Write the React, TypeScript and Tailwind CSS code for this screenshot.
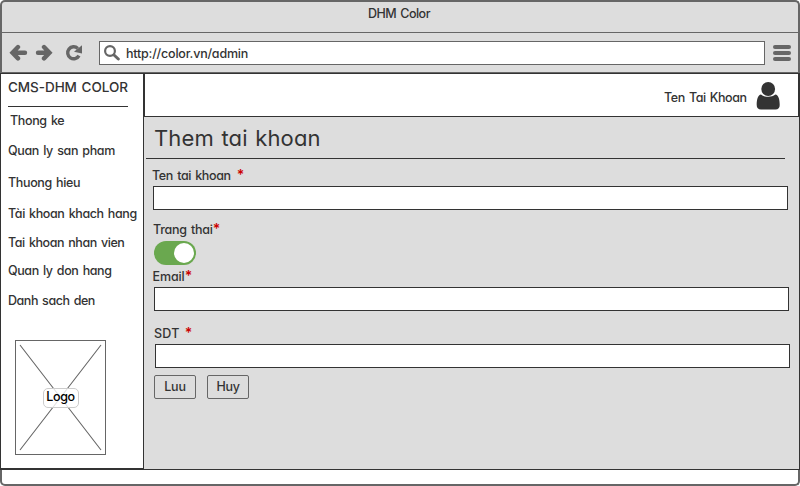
import type { ReactNode } from "react";
import { clsx } from "clsx";

function Text({ className, children }: { className?: string; children: ReactNode }) {
  return <div className={clsx("h-4 whitespace-nowrap leading-[18px] [word-spacing:1.2px]", className)}>{children}</div>;
}

function Star({ className }: { className?: string }) {
  return <span className={clsx("text-[14px] leading-none font-semibold tracking-normal text-[#cc0000]", className)}>*</span>;
}

const menu = [
  { label: "Thong ke", style: "mt-[5px] ml-[2px] tracking-[-0.35px]" },
  { label: "Quan ly san pham", style: "mt-[14px] tracking-[-0.34px]" },
  { label: "Thuong hieu", style: "mt-4 tracking-[-0.35px]" },
  { label: "Tài khoan khach hang", style: "mt-[15px] tracking-[-0.38px]" },
  { label: "Tai khoan nhan vien", style: "mt-[13px] tracking-[-0.42px]" },
  { label: "Quan ly don hang", style: "mt-3 tracking-[-0.38px]" },
  { label: "Danh sach den", style: "mt-[14px] tracking-[-0.44px]" },
];

function Toolbar() {
  return (
    <div className="flex h-[39px] items-start pt-2 pl-[6px]">
      <svg className="mt-[3px] h-[18px] w-[75px]" viewBox="0 0 75 18" fill="none" stroke="#666">
        <path d="M17 8.7H5M10 3L4.5 8.7l5.5 5.7" strokeWidth="4.4" strokeLinecap="round" />
        <path d="M30 8.7h11M36 3l5.5 5.7-5.5 5.7" strokeWidth="4.4" strokeLinecap="round" />
        <path d="M69.8 4.4A6 6 0 1 0 71 11.6" strokeWidth="3.4" />
        <path d="M74 1.2v8.2l-8-1.6z" fill="#666" stroke="none" />
      </svg>
      <div className="ml-4 flex h-6 w-[666px] items-start border border-[#666] bg-white">
        <svg className="mt-[3px] ml-1 size-4" viewBox="0 0 16 16" fill="none" stroke="#666">
          <circle cx="6" cy="6" r="4.9" strokeWidth="2.2" />
          <path d="M10 10l4.3 4" strokeWidth="3" strokeLinecap="round" />
        </svg>
        <Text className="mt-[3px] ml-[6px] tracking-[-0.2px]">http://color.vn/admin</Text>
      </div>
      <div className="mt-1 ml-2 flex w-[18px] flex-col gap-[2px]">
        <div className="h-1 rounded-full bg-[#666]" />
        <div className="h-1 rounded-full bg-[#666]" />
        <div className="h-1 rounded-full bg-[#666]" />
      </div>
    </div>
  );
}

function Sidebar() {
  return (
    <aside className="h-[396px] w-36 shrink-0 border border-[#333] bg-white pt-1 pl-[7px]">
      <Text className="text-[13.5px] tracking-[-0.06px]">CMS-DHM COLOR</Text>
      <div className="mt-3 h-px w-[120px] bg-[#333]" />
      {menu.map((m) => (
        <Text key={m.label} className={m.style}>{m.label}</Text>
      ))}
      <div className="mt-8 ml-[7px] grid h-[115px] w-[91px] place-items-center border border-[#666]">
        <svg className="col-start-1 row-start-1 h-[113px] w-[89px]" viewBox="0 0 89 113" stroke="#666" strokeWidth="1.1">
          <path d="M4 4l81 105M85 4L4 109" />
        </svg>
        <div className="col-start-1 row-start-1 h-5 w-9 rounded-[5px] border border-[#ccc] bg-white/80 text-center text-black">
          <Text className="-mt-px tracking-[-0.4px]">Logo</Text>
        </div>
      </div>
    </aside>
  );
}

function Main() {
  return (
    <main className="flex w-[656px] flex-col border-r border-[#333] bg-[#ddd]">
      <header className="flex h-11 w-[655px] items-start border border-[#333] bg-white pl-[519px]">
        <Text className="mt-[15px] w-[92px] tracking-[-0.42px]">Ten Tai Khoan</Text>
        <svg className="mt-2 h-[28px] w-[24px]" viewBox="0 0 24 28" fill="#333">
          <circle cx="12.2" cy="7" r="6.9" />
          <path d="M5 12.6c3.8 2.9 10.6 2.9 14.4 0 3 .5 4.3 5 4.3 10.4 0 3-1.4 4.4-4.2 4.4H5C2.2 27.4.7 26 .7 23c0-5.4 1.3-9.9 4.3-10.4z" />
        </svg>
      </header>
      <h1 className="mt-[7px] ml-[10px] h-7 text-[22px] leading-7 font-[420] tracking-[0.15px] [word-spacing:1.2px]">Them tai khoan</h1>
      <div className="mt-[6px] ml-[2px] h-px w-[639px] bg-[#333]" />
      <Text className="mt-2 ml-[8px] tracking-[-0.36px]">Ten tai khoan<Star className="ml-[6px]" /></Text>
      <div className="mt-[3px] ml-[9px] h-6 w-[635px] border border-[#333] bg-white" />
      <Text className="mt-[11px] ml-[9px] tracking-[-0.26px]">Trang thai<Star /></Text>
      <div className="mt-1 ml-[10px] flex h-6 w-[42px] items-center justify-end rounded-full bg-[#6aa84f] pr-[2px]">
        <div className="size-5 rounded-full bg-white" />
      </div>
      <Text className="mt-[3px] ml-[8.5px] tracking-[-0.1px]">Email<Star /></Text>
      <div className="mt-[3px] ml-[10px] h-6 w-[635px] border border-[#333] bg-white" />
      <Text className="mt-[14px] ml-[10px] tracking-[0.3px]">SDT<Star className="ml-[5px]" /></Text>
      <div className="mt-[3px] ml-[11px] h-6 w-[635px] border border-[#333] bg-white" />
      <div className="mt-[7px] ml-[10px] flex gap-[11px]">
        <button className="h-6 w-[42px] rounded-[2px] border border-[#666]"><Text className="-mt-[2px] tracking-[-0.2px]">Luu</Text></button>
        <button className="h-6 w-[42px] rounded-[2px] border border-[#666]"><Text className="-mt-[2px] tracking-[-0.3px]">Huy</Text></button>
      </div>
    </main>
  );
}

export default function App() {
  return (
    <div className="h-[486px] w-[800px] overflow-hidden bg-white font-['Inter','Noto_Sans',sans-serif] text-[12.5px] font-[450] text-[#333] [font-feature-settings:'cv11']">
      <div className="h-[73px] rounded-t-[5px] border-2 border-b-0 border-[#666] bg-[#ddd]">
        <div className="flex h-[31px] justify-center border-b border-[#666] pt-[3px] pr-[2px]">
          <Text className="tracking-[-0.5px]">DHM Color</Text>
        </div>
        <Toolbar />
        <div className="h-px bg-[#666]" />
      </div>
      <div className="flex h-[397px] border-b border-[#333]">
        <Sidebar />
        <Main />
      </div>
      <div className="h-4 rounded-b-[5px] border-2 border-t-0 border-[#666] bg-white" />
    </div>
  );
}
